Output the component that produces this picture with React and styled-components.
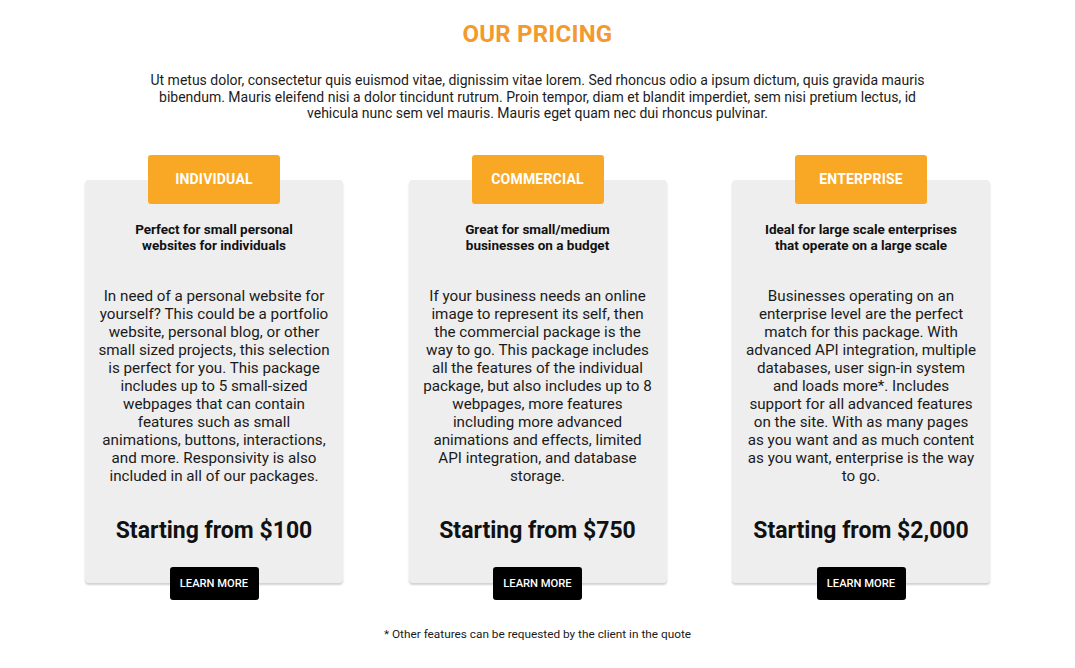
import React from "react";
import styled, { createGlobalStyle } from "styled-components";

const GlobalStyle = createGlobalStyle`
  html, body { margin: 0; padding: 0; background: #ffffff; }
  body { font-family: Roboto, "Liberation Sans", Arial, sans-serif; color: #111; }
`;

const Page = styled.main`
  display: flex;
  flex-direction: column;
  align-items: center;
  padding-top: 20px;
  width: 1075px;
`;

const Title = styled.h1`
  margin: 0;
  font-size: 24px;
  line-height: 28px;
  font-weight: 700;
  color: #f29a2e;
  letter-spacing: 0.2px;
`;

const Intro = styled.p`
  margin: 24px 0 0;
  max-width: 800px;
  text-align: center;
  font-size: 14px;
  line-height: 16.6px;
  color: #1c1c1c;
`;

const Grid = styled.section`
  display: grid;
  grid-template-columns: repeat(3, 258px);
  column-gap: 65.5px;
  margin-top: 33px;
`;

const Card = styled.article`
  display: flex;
  flex-direction: column;
  align-items: center;
  margin-top: 25px;
  padding: 0 13px;
  background: #eeeeee;
  border-radius: 4px;
  box-shadow: 0 2px 2px rgba(0, 0, 0, 0.18);
`;

const Tag = styled.div`
  margin-top: -25px;
  width: 132px;
  height: 49px;
  display: flex;
  align-items: center;
  justify-content: center;
  background: #f9a826;
  border-radius: 3px;
  color: #ffffff;
  font-size: 14px;
  font-weight: 700;
  text-transform: uppercase;
  letter-spacing: 0.2px;
`;

const Subtitle = styled.h3`
  margin: 17px 0 0;
  max-width: 205px;
  text-align: center;
  font-size: 13.5px;
  line-height: 16px;
  font-weight: 700;
  color: #111;
`;

const Body = styled.p`
  flex: 1;
  margin: 34px 0 0;
  text-align: center;
  font-size: 15.2px;
  line-height: 18px;
  color: #1a1a1a;
`;

const Price = styled.div`
  margin-top: 32px;
  font-size: 23px;
  line-height: 28px;
  font-weight: 700;
  color: #111;
`;

const Button = styled.button`
  margin: 22px 0 -16.5px;
  width: 89px;
  height: 33px;
  border: none;
  border-radius: 3px;
  background: #000;
  color: #fff;
  font-family: Roboto, "Liberation Sans", Arial, sans-serif;
  font-size: 11.2px;
  font-weight: 500;
  text-transform: uppercase;
  cursor: pointer;
`;

const Footnote = styled.p`
  margin: 44px 0 0;
  font-size: 11.8px;
  line-height: 14px;
  color: #1a1a1a;
`;

const plans = [
  {
    name: "Individual",
    subtitle: "Perfect for small personal websites for individuals",
    body:
      "In need of a personal website for yourself? This could be a portfolio website, personal blog, or other small sized projects, this selection is perfect for you. This package includes up to 5 small-sized webpages that can contain features such as small animations, buttons, interactions, and more. Responsivity is also included in all of our packages.",
    price: "$100",
  },
  {
    name: "Commercial",
    subtitle: "Great for small/medium businesses on a budget",
    body:
      "If your business needs an online image to represent its self, then the commercial package is the way to go. This package includes all the features of the individual package, but also includes up to 8 webpages, more features including more advanced animations and effects, limited API integration, and database storage.",
    price: "$750",
  },
  {
    name: "Enterprise",
    subtitle: "Ideal for large scale enterprises that operate on a large scale",
    body:
      "Businesses operating on an enterprise level are the perfect match for this package. With advanced API integration, multiple databases, user sign-in system and loads more*. Includes support for all advanced features on the site. With as many pages as you want and as much content as you want, enterprise is the way to go.",
    price: "$2,000",
  },
];

export default function App() {
  return (
    <>
      <GlobalStyle />
      <Page>
        <Title>OUR PRICING</Title>
        <Intro>
          Ut metus dolor, consectetur quis euismod vitae, dignissim vitae lorem. Sed rhoncus odio a ipsum dictum, quis gravida mauris
          bibendum. Mauris eleifend nisi a dolor tincidunt rutrum. Proin tempor, diam et blandit imperdiet, sem nisi pretium lectus, id
          vehicula nunc sem vel mauris. Mauris eget quam nec dui rhoncus pulvinar.
        </Intro>
        <Grid>
          {plans.map((p) => (
            <Card key={p.name}>
              <Tag>{p.name}</Tag>
              <Subtitle>{p.subtitle}</Subtitle>
              <Body>{p.body}</Body>
              <Price>Starting from {p.price}</Price>
              <Button>Learn More</Button>
            </Card>
          ))}
        </Grid>
        <Footnote>* Other features can be requested by the client in the quote</Footnote>
      </Page>
    </>
  );
}
